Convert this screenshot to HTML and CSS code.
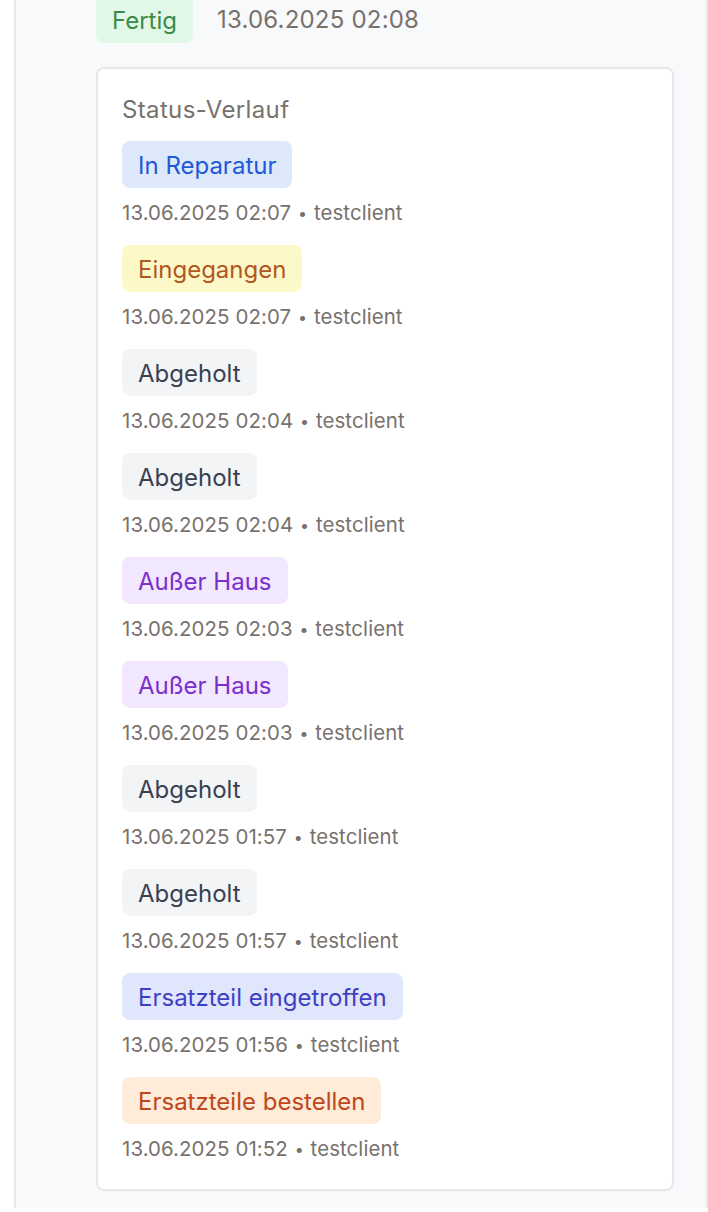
FILE: index.html
```html
<!DOCTYPE html>
<html lang="de">
<head>
<meta charset="utf-8">
<link rel="stylesheet" href="styles.css">
</head>
<body>
<div class="panel">
  <div class="head">
    <span class="badge green">Fertig</span>
    <span class="head-date">13.06.2025 02:08</span>
  </div>
  <div class="card">
    <div class="title">Status-Verlauf</div>
    <div class="list">
      <div class="item"><span class="badge blue">In Reparatur</span><div class="meta">13.06.2025 02:07 <span class="dot">•</span> testclient</div></div>
      <div class="item"><span class="badge yellow">Eingegangen</span><div class="meta">13.06.2025 02:07 <span class="dot">•</span> testclient</div></div>
      <div class="item"><span class="badge gray">Abgeholt</span><div class="meta">13.06.2025 02:04 <span class="dot">•</span> testclient</div></div>
      <div class="item"><span class="badge gray">Abgeholt</span><div class="meta">13.06.2025 02:04 <span class="dot">•</span> testclient</div></div>
      <div class="item"><span class="badge purple">Außer Haus</span><div class="meta">13.06.2025 02:03 <span class="dot">•</span> testclient</div></div>
      <div class="item"><span class="badge purple">Außer Haus</span><div class="meta">13.06.2025 02:03 <span class="dot">•</span> testclient</div></div>
      <div class="item"><span class="badge gray">Abgeholt</span><div class="meta">13.06.2025 01:57 <span class="dot">•</span> testclient</div></div>
      <div class="item"><span class="badge gray">Abgeholt</span><div class="meta">13.06.2025 01:57 <span class="dot">•</span> testclient</div></div>
      <div class="item"><span class="badge indigo">Ersatzteil eingetroffen</span><div class="meta">13.06.2025 01:56 <span class="dot">•</span> testclient</div></div>
      <div class="item"><span class="badge orange">Ersatzteile bestellen</span><div class="meta">13.06.2025 01:52 <span class="dot">•</span> testclient</div></div>
    </div>
  </div>
</div>
</body>
</html>
```
FILE: styles.css
```css
html, body {
  margin: 0;
  padding: 0;
  background: #ffffff;
}
body {
  font-family: Inter, "Noto Sans", sans-serif;
  overflow: hidden;
}
.panel {
  margin-left: 14px;
  min-height: 1212px;
  background: #f8f9fb;
  border-left: 2px solid #e5e7eb;
  border-right: 2px solid #e5e7eb;
  padding-left: 80px;
  box-sizing: border-box;
}
.head {
  display: flex;
  align-items: center;
  gap: 24px;
  margin-top: -4px;
}
.head-date {
  font-size: 24px;
  letter-spacing: 0.2px;
  color: #78716c;
}
.card {
  margin-top: 24px;
  width: 578px;
  box-sizing: border-box;
  background: #ffffff;
  border: 2px solid #e5e7eb;
  border-radius: 8px;
  padding: 27px 24px 28px;
}
.title {
  font-size: 24px;
  line-height: 28px;
  letter-spacing: 0.35px;
  color: #78716c;
  margin-bottom: 17px;
}
.list {
  display: flex;
  flex-direction: column;
  gap: 20px;
}
.item {
  display: flex;
  flex-direction: column;
  align-items: flex-start;
}
.badge {
  display: inline-block;
  font-size: 24px;
  line-height: 29px;
  padding: 10px 16px 8px;
  border-radius: 8px;
}
.meta {
  margin-top: 13px;
  font-size: 20.4px;
  line-height: 24px;
  letter-spacing: 0.1px;
  color: #78716c;
}
.dot {
  font-size: 16px;
  line-height: 0;
  vertical-align: 1px;
  padding: 0 1px;
}
.green { background: #e2f8e7; color: #3a8a4a; }
.blue { background: #dde8fb; color: #2258d6; }
.yellow { background: #fdf8c8; color: #b1571f; }
.gray { background: #f3f4f6; color: #374151; }
.purple { background: #f1e7fe; color: #7a2fcb; }
.indigo { background: #e0e6fc; color: #3f3fc4; }
.orange { background: #feecd9; color: #c0461b; }
```
